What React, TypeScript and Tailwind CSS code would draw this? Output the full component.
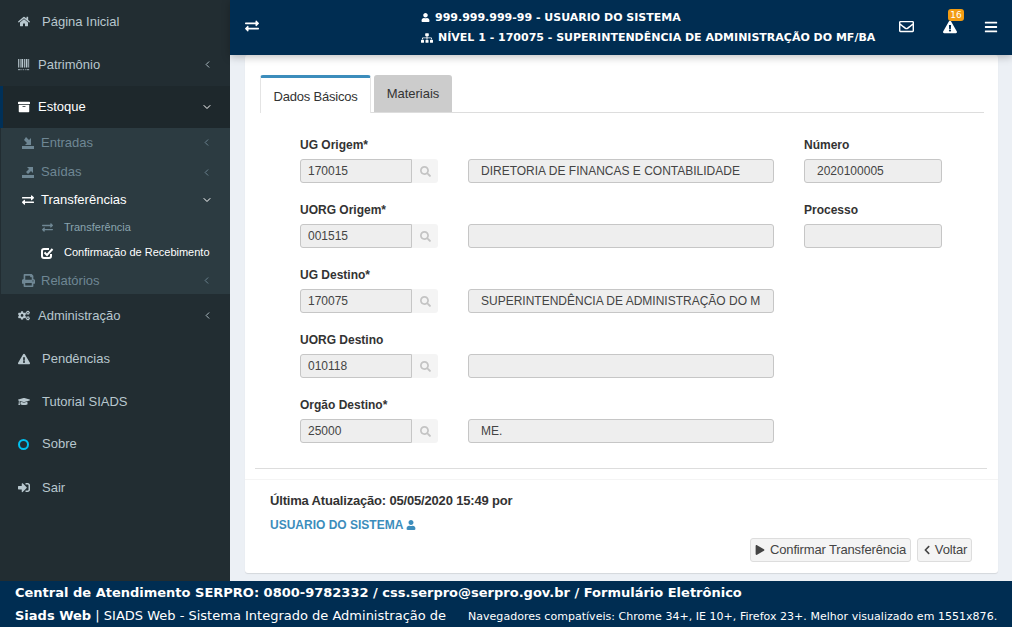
import type { ReactNode } from "react";
import {
  FaArchive,
  FaBars,
  FaChevronLeft,
  FaCogs,
  FaExchangeAlt,
  FaExclamationTriangle,
  FaGraduationCap,
  FaHome,
  FaPlay,
  FaPrint,
  FaRegEnvelope,
  FaSearch,
  FaSignInAlt,
  FaSitemap,
  FaUser,
} from "react-icons/fa";
import { LuChevronDown, LuChevronLeft } from "react-icons/lu";

const sans = "font-['Liberation_Sans',Arial,sans-serif]";
const deja = "font-['DejaVu_Sans',Verdana,sans-serif]";

// glyphicon-like import / export tray icons
function TrayIcon({ out }: { out?: boolean }) {
  return (
    <svg width="12" height="12" viewBox="0 0 12 12" fill="currentColor">
      <rect x="0" y="9" width="12" height="3" />
      {out ? (
        <path d="M5 1h6v6L9 5 6 8 4 6l3-3z" />
      ) : (
        <path d="M2 0l3 3 2-2v7H1l2-2-3-3z" transform="translate(2 0)" />
      )}
    </svg>
  );
}

function BarcodeIcon() {
  return (
    <svg width="14" height="14" viewBox="0 0 14 14" fill="currentColor">
      <rect x="0" y="0" width="1" height="10" />
      <rect x="2" y="0" width="1" height="10" />
      <rect x="4" y="0" width="2" height="10" />
      <rect x="7" y="0" width="1" height="10" />
      <rect x="9" y="0" width="2" height="10" />
      <rect x="12" y="0" width="1" height="10" />
      <rect x="0" y="12" width="3" height="1" />
      <rect x="4" y="12" width="1" height="1" />
      <rect x="6" y="12" width="1" height="1" />
      <rect x="8" y="12" width="1" height="1" />
      <rect x="10" y="12" width="3" height="1" />
    </svg>
  );
}

function CheckIcon() {
  return (
    <svg width="13" height="12" viewBox="0 0 13 12" fill="none" stroke="currentColor" strokeWidth="2">
      <path d="M10 7v2a2 2 0 0 1-2 2H3a2 2 0 0 1-2-2V4a2 2 0 0 1 2-2h5" />
      <path d="M3.5 5.5l2.5 2.5 5.5-6" />
    </svg>
  );
}

function TopItem({
  icon,
  label,
  arrow,
  labelX = "ml-[12px]",
  h = "h-[43px]",
}: {
  icon: ReactNode;
  label: string;
  arrow?: boolean;
  labelX?: string;
  h?: string;
}) {
  return (
    <div className={`flex items-center pl-[18px] pr-[18px] text-[13px] text-[#b8c7ce] ${h}`}>
      <span className="flex w-[12px] justify-start">{icon}</span>
      <span className={labelX}>{label}</span>
      {arrow && <LuChevronLeft className="ml-auto mr-[-1px]" size={11} />}
    </div>
  );
}

function SubItem({
  icon,
  label,
  arrow,
  active,
  h,
}: {
  icon: ReactNode;
  label: string;
  arrow?: "left" | "down";
  active?: boolean;
  h: string;
}) {
  return (
    <div
      className={`flex items-center pl-[21px] pr-[18px] text-[13px] ${h} ${
        active ? "text-white" : "text-[#6f8794]"
      }`}
    >
      <span className="flex w-[19px] justify-start">{icon}</span>
      <span>{label}</span>
      {arrow === "left" && <LuChevronLeft className="ml-auto" size={11} />}
      {arrow === "down" && <LuChevronDown className="ml-auto mr-[-1px]" size={12} />}
    </div>
  );
}

function Sidebar() {
  return (
    <aside className={`w-[230px] shrink-0 bg-[#222d32] ${sans}`}>
      <TopItem icon={<FaHome size={13} />} label="Página Inicial" />
      <TopItem icon={<BarcodeIcon />} label="Patrimônio" labelX="ml-[8px]" arrow />
      <div className="flex h-[42px] items-center border-l-[3px] border-[#003058] bg-[#1e282c] pl-[15px] pr-[18px] text-[13px] text-white">
        <span className="flex w-[12px]">
          <FaArchive size={12} />
        </span>
        <span className="ml-[8px]">Estoque</span>
        <LuChevronDown className="ml-auto mr-[-1px]" size={12} />
      </div>
      <div className="ml-[1px] bg-[#2c3b41]">
        <SubItem h="h-[29px]" icon={<TrayIcon />} label="Entradas" arrow="left" />
        <SubItem h="h-[30px]" icon={<TrayIcon out />} label="Saídas" arrow="left" />
        <SubItem h="h-[26px]" icon={<FaExchangeAlt size={12} />} label="Transferências" arrow="down" active />
        <div className="flex h-[29px] items-center pl-[41px] text-[11px] text-[#8aa4af]">
          <span className="flex w-[22px] text-[#6f8794]">
            <FaExchangeAlt size={11} />
          </span>
          Transferência
        </div>
        <div className="flex h-[25px] items-center pb-[4px] pl-[40px] text-[11px] text-white">
          <span className="flex w-[23px]">
            <CheckIcon />
          </span>
          Confirmação de Recebimento
        </div>
        <SubItem h="h-[27px]" icon={<FaPrint size={13} />} label="Relatórios" arrow="left" />
      </div>
      <TopItem icon={<FaCogs size={15} />} label="Administração" labelX="ml-[8px]" arrow />
      <TopItem icon={<FaExclamationTriangle size={14} />} label="Pendências" />
      <TopItem icon={<FaGraduationCap size={15} />} label="Tutorial SIADS" />
      <div className="flex h-[43px] items-center pb-[1px] pl-[18px] text-[13px] text-[#b8c7ce]">
        <span className="h-[11px] w-[11px] rounded-full border-2 border-[#00c0ef]" />
        <span className="ml-[13px]">Sobre</span>
      </div>
      <TopItem icon={<FaSignInAlt size={15} />} label="Sair" />
    </aside>
  );
}

function Header() {
  return (
    <header className="relative z-10 flex h-[55px] shrink-0 items-center bg-[#002d52] pl-[15px] pr-[14px] text-white shadow-[0_2px_8px_rgba(0,0,0,0.25)]">
      <FaExchangeAlt size={14} className="mb-[3px]" />
      <div className={`ml-[162px] whitespace-nowrap text-[11px] font-bold leading-[20px] ${deja}`}>
        <div className="flex items-center gap-[5px]">
          <FaUser size={9} />
          999.999.999-99 - USUARIO DO SISTEMA
        </div>
        <div className="flex items-center gap-[5px]">
          <FaSitemap size={12} />
          NÍVEL 1 - 170075 - SUPERINTENDÊNCIA DE ADMINISTRAÇÃO DO MF/BA
        </div>
      </div>
      <div className="mb-[2px] ml-auto flex items-center gap-[29px]">
        <FaRegEnvelope size={15} />
        <div className="relative">
          <FaExclamationTriangle size={14} />
          <span
            className={`absolute left-[5px] top-[-11px] h-[12px] w-[16px] rounded-[3px] bg-[#f39c12] text-center text-[9px] leading-[12px] ${deja}`}
          >
            16
          </span>
        </div>
        <FaBars size={14} className="ml-[-2px]" />
      </div>
    </header>
  );
}

const inputCls =
  "flex h-[24px] items-center rounded-[3px] border border-[#c6c6c6] bg-[#eeeeee] text-[12px] text-[#444]";

const labelCls = "mb-[4px] pt-[1px] text-[12px] font-bold leading-[20px] text-[#333]";

function FormRow({
  label,
  code,
  name,
  extraLabel,
  extraValue,
}: {
  label: string;
  code: string;
  name?: string;
  extraLabel?: string;
  extraValue?: string;
}) {
  return (
    <div className="flex h-[65px] gap-[30px]">
      <div className="w-[138px]">
        <div className={labelCls}>{label}</div>
        <div className="flex">
          <div className={`${inputCls} w-[112px] rounded-r-none pl-[7px]`}>{code}</div>
          <div className="flex h-[24px] w-[26px] items-center justify-center rounded-r-[3px] bg-[#f4f4f4] text-[#c4c4c4]">
            <FaSearch size={11} />
          </div>
        </div>
      </div>
      <div className="w-[306px] pt-[25px]">
        <div className={`${inputCls} pl-[12px]`}>{name}</div>
      </div>
      {extraLabel && (
        <div className="w-[138px]">
          <div className={labelCls}>{extraLabel}</div>
          <div className={`${inputCls} pl-[12px]`}>{extraValue}</div>
        </div>
      )}
    </div>
  );
}

function Card() {
  return (
    <section className={`mb-[8px] ml-[15px] mr-[14px] flex-1 rounded-[3px] bg-white pt-[20px] shadow-[0_1px_1px_rgba(0,0,0,0.1)] ${sans}`}>
      <div className="mx-[15px] mr-[14px] flex h-[38px] items-start gap-[3px] border-b border-[#dddddd] text-[13px] text-[#333]">
        <div className="flex h-[38px] w-[111px] items-center justify-center rounded-t-[3px] border-x border-[#e4e4e4] border-t-[3px] border-t-[#3c8dbc] bg-white pt-[2px] tracking-[-0.2px]">
          Dados Básicos
        </div>
        <div className="flex h-[37px] w-[78px] items-center justify-center rounded-t-[3px] bg-[#cccccc] pt-[1px]">
          Materiais
        </div>
      </div>
      <div className="pl-[55px] pt-[21px]">
        <FormRow
          label="UG Origem*"
          code="170015"
          name="DIRETORIA DE FINANCAS E CONTABILIDADE"
          extraLabel="Número"
          extraValue="2020100005"
        />
        <FormRow label="UORG Origem*" code="001515" extraLabel="Processo" />
        <FormRow label="UG Destino*" code="170075" name="SUPERINTENDÊNCIA DE ADMINISTRAÇÃO DO M" />
        <FormRow label="UORG Destino" code="010118" />
        <FormRow label="Orgão Destino*" code="25000" name="ME." />
      </div>
      <div className="mx-[10px] mr-[11px] mt-[9px] border-t border-[#dddddd]" />
      <div className="mt-[10px] border-t border-[#f4f4f4] px-[25px] pt-[11px]">
        <div className="text-[13px] font-bold leading-[20px] tracking-[-0.18px] text-[#333]">
          Última Atualização: 05/05/2020 15:49 por
        </div>
        <div className="mt-[4px] flex items-center gap-[3px] text-[12px] font-bold leading-[20px] text-[#3c8dbc]">
          USUARIO DO SISTEMA <FaUser size={10} />
        </div>
        <div className="mr-[1px] mt-[3px] flex justify-end gap-[6px] text-[13px] tracking-[-0.15px] text-[#444]">
          <div className="flex h-[24px] w-[161px] items-center justify-center gap-[5px] rounded-[3px] border border-[#dddddd] bg-[#f4f4f4]">
            <FaPlay size={10} /> Confirmar Transferência
          </div>
          <div className="flex h-[24px] w-[55px] items-center justify-center gap-[3px] rounded-[3px] border border-[#dddddd] bg-[#f4f4f4]">
            <FaChevronLeft size={10} /> Voltar
          </div>
        </div>
      </div>
    </section>
  );
}

function Footer() {
  return (
    <footer className={`h-[46px] shrink-0 overflow-hidden whitespace-nowrap bg-[#002d52] pl-[15px] text-white ${deja}`}>
      <div className="pt-[3px] text-[13px] font-bold leading-[18px]">
        Central de Atendimento SERPRO: 0800-9782332 / css.serpro@serpro.gov.br / Formulário Eletrônico
      </div>
      <div className="mt-[4px] flex items-baseline text-[13px] leading-[20px]">
        <span className="w-[453px]">
          <b>Siads Web</b> | SIADS Web - Sistema Integrado de Administração de
        </span>
        <span className="text-[11px] tracking-[0.03px]">
          Navegadores compatíveis: Chrome 34+, IE 10+, Firefox 23+. Melhor visualizado em 1551x876.
        </span>
      </div>
    </footer>
  );
}

export default function App() {
  return (
    <div className="flex h-[627px] w-[1012px] flex-col overflow-hidden bg-[#ecf0f5]">
      <div className="flex min-h-0 flex-1">
        <Sidebar />
        <main className="flex min-w-0 flex-1 flex-col">
          <Header />
          <Card />
        </main>
      </div>
      <Footer />
    </div>
  );
}
